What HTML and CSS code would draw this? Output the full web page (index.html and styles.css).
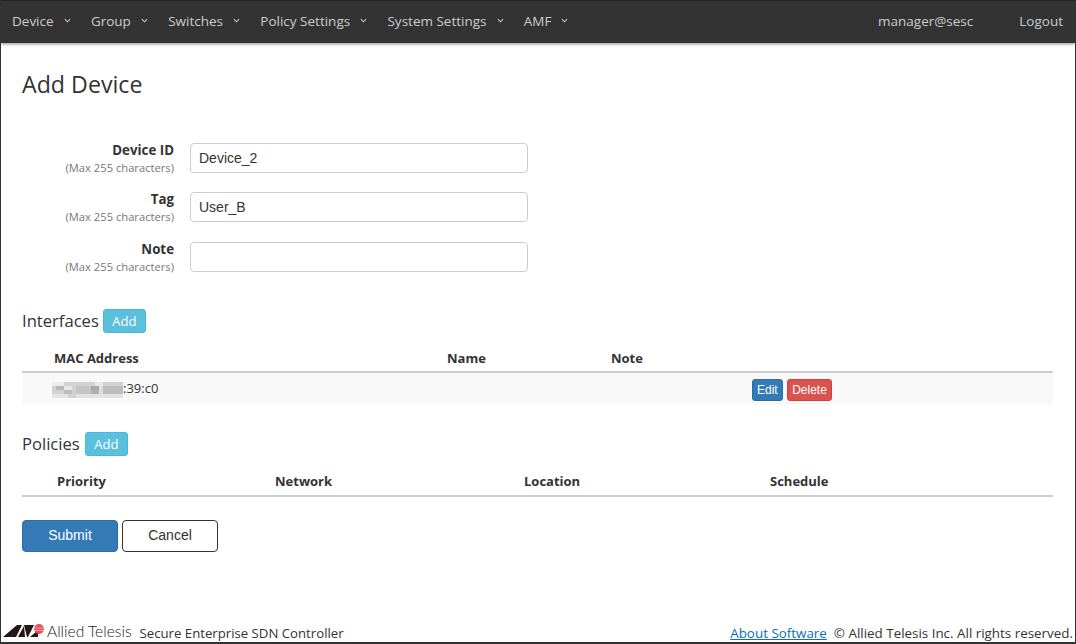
FILE: index.html
```html
<!doctype html>
<html lang="en">
<head>
<meta charset="utf-8">
<title>Add Device</title>
<link rel="stylesheet" href="styles.css">
</head>
<body>

<div class="frame">

	<div class="nav">
		<ul class="menu">
			<li>Device <svg class="caret" viewBox="0 0 8 5"><path d="M1 1l3 3 3-3"/></svg></li>
			<li>Group <svg class="caret" viewBox="0 0 8 5"><path d="M1 1l3 3 3-3"/></svg></li>
			<li>Switches <svg class="caret" viewBox="0 0 8 5"><path d="M1 1l3 3 3-3"/></svg></li>
			<li>Policy Settings <svg class="caret" viewBox="0 0 8 5"><path d="M1 1l3 3 3-3"/></svg></li>
			<li>System Settings <svg class="caret" viewBox="0 0 8 5"><path d="M1 1l3 3 3-3"/></svg></li>
			<li>AMF <svg class="caret" viewBox="0 0 8 5"><path d="M1 1l3 3 3-3"/></svg></li>
		</ul>
		<div class="user">manager@sesc</div>
		<div class="logout">Logout</div>
	</div>

	<div class="content">
		<h1>Add Device</h1>

		<div class="form">
			<div class="row">
				<label><b>Device ID</b><small>(Max 255 characters)</small></label>
				<input type="text" value="Device_2">
			</div>
			<div class="row">
				<label><b>Tag</b><small>(Max 255 characters)</small></label>
				<input type="text" value="User_B">
			</div>
			<div class="row">
				<label><b>Note</b><small>(Max 255 characters)</small></label>
				<input type="text">
			</div>
		</div>

		<div class="head head-first">
			<h2>Interfaces</h2>
			<button class="btn info">Add</button>
		</div>
		<table class="list iface">
			<tr>
				<th class="c1">MAC Address</th>
				<th class="c2">Name</th>
				<th class="c3">Note</th>
				<th></th>
			</tr>
			<tr class="odd">
				<td class="mac">
					<svg class="blur" viewBox="0 0 72 16" shape-rendering="crispEdges">
						<rect width="72" height="16" fill="#d2d2d2"/>
						<rect x="0" y="0" width="12" height="4" fill="#ececec"/>
						<rect x="4" y="4" width="8" height="4" fill="#b8b8b8"/>
						<rect x="12" y="4" width="8" height="4" fill="#e6e6e6"/>
						<rect x="12" y="8" width="8" height="4" fill="#bcbcbc"/>
						<rect x="0" y="12" width="16" height="4" fill="#e4e4e4"/>
						<rect x="24" y="4" width="20" height="8" fill="#c4c4c4"/>
						<rect x="44" y="0" width="8" height="4" fill="#e8e8e8"/>
						<rect x="40" y="4" width="8" height="4" fill="#a8a8a8"/>
						<rect x="48" y="4" width="4" height="8" fill="#dedede"/>
						<rect x="40" y="8" width="8" height="4" fill="#b0b0b0"/>
						<rect x="52" y="4" width="20" height="8" fill="#bdbdbd"/>
						<rect x="24" y="12" width="48" height="4" fill="#e2e2e2"/>
					</svg><span>:39:c0</span>
				</td>
				<td></td>
				<td></td>
				<td><div class="acts"><button class="btn primary">Edit</button><button class="btn danger">Delete</button></div></td>
			</tr>
		</table>

		<div class="head head-second">
			<h2>Policies</h2>
			<button class="btn info">Add</button>
		</div>
		<table class="list policy">
			<tr>
				<th class="p1">Priority</th>
				<th class="p2">Network</th>
				<th class="p3">Location</th>
				<th>Schedule</th>
			</tr>
		</table>

		<div class="actions">
			<button class="big primary">Submit</button>
			<button class="big plain">Cancel</button>
		</div>
	</div>

	<div class="footer">
		<div class="brand">
			<svg class="logo" viewBox="0 0 42 15">
				<path d="M0 14L14 2h5L13 14z" fill="#231815"/>
				<path d="M15 14L21 3l1 11z" fill="#231815"/>
				<path d="M21 2h10l-6 12h-1z" fill="#231815"/>
				<path d="M27 14l8-7v7z" fill="#231815"/>
				<circle cx="36" cy="6" r="5" fill="#e8505b"/>
				<path d="M31 5h10M31 7.500h10" stroke="#fff" stroke-width=".5"/>
			</svg>
			<span class="logotext">Allied Telesis</span>
			<span class="product">Secure Enterprise SDN Controller</span>
		</div>
		<div class="copy"><a href="#">About Software</a>&nbsp; © Allied Telesis Inc. All rights reserved.</div>
	</div>

</div>

</body>
</html>
```

FILE: styles.css
```css
html,body {margin:0;padding:0;}
body {background-color:#fff;}
ul {margin:0;padding:0;list-style:none;}

.frame {
	display:flex;
	flex-direction:column;
	box-sizing:border-box;
	width:1076px; height:644px;
	border:1px solid #333;
	border-top:0;
	font-family:"Open Sans","Liberation Sans",sans-serif;
	color:#333;
	overflow:hidden;
}

/* nav */

.nav {
	display:flex;
	align-items:center;
	flex:none;
	height:43px;
	box-sizing:border-box;
	padding:0 12px 3px 11px;
	background-color:#333;
	border-top:1px solid #222;
	box-shadow:0 1px 3px rgba(0,0,0,0.45);
	color:#ccc;
	font-size:13.500px;
}

.menu {display:flex;gap:20.300px;}
.menu li {display:flex;align-items:center;gap:10px;white-space:nowrap;}

.caret {
	width:7px; height:5px;
	fill:none;
	stroke:#ccc;
	stroke-width:1.200;
}

.user {margin-left:auto;}
.logout {margin-left:46px;}

/* content */

.content {flex:1;padding:0 22px 0 21px;}

h1 {
	margin:26px 0 0;
	font-size:23.200px;
	line-height:30px;
	font-weight:400;
}

.form {margin-top:44px;}

.row {
	display:flex;
	height:30px;
	margin-bottom:19.400px;
}

.row label {
	width:152px;
	margin-right:16px;
	text-align:right;
}
.row b {display:block;font-size:13.300px;line-height:14px;}
.row small {display:block;font-size:11.200px;line-height:16px;margin-top:3px;color:#777;}

.row input {
	width:338px; height:30px;
	box-sizing:border-box;
	padding:0 8px;
	border:1px solid #ccc;
	border-radius:4px;
	font-family:"Liberation Sans",sans-serif;
	font-size:14px;
	color:#333;
}

.head {display:flex;align-items:center;gap:4px;}
.head-first {margin-top:37px;}
.head-second {margin-top:27px;gap:5px;}

h2 {
	margin:0;
	font-size:16.600px;
	line-height:24px;
	font-weight:400;
}

.btn {
	height:22px;
	padding:0 4px;
	border:1px solid transparent;
	border-radius:3px;
	font-family:"Liberation Sans",sans-serif;
	font-size:12px;
	color:#fff;
}
.head .btn {height:24px;padding:0 8.500px;font-family:"Open Sans",sans-serif;font-size:13px;}

.info {background-color:#5bc0de;border-color:#46b8da;}
.primary {background-color:#337ab7;border-color:#2e6da4;}
.danger {background-color:#d9534f;border-color:#d43f3a;padding:0 4.500px;}

.list {
	width:100%;
	border-collapse:collapse;
	table-layout:fixed;
	font-size:13px;
}

.list th {
	height:25px;
	padding:0;
	border-bottom:2px solid #ccc;
	text-align:left;
	font-weight:700;
}

.iface {margin-top:13px;}
.iface .c1 {width:393px;padding-left:32px;}
.iface .c2 {width:164px;}
.iface .c3 {width:141px;}
.odd {background-color:#f9f9f9;}
.odd td {height:32px;padding:0;}
.mac {padding-left:30px !important;white-space:nowrap;}
.mac span {position:relative;top:-1px;}

.blur {
	width:71px; height:16px;
	vertical-align:-4px;
	filter:blur(0.6px);
}

.acts {display:flex;gap:4px;padding-top:2px;}

.policy {margin-top:13px;}
.policy th {height:24px;padding-bottom:2px;}
.policy .p1 {width:218px;padding-left:35px;}
.policy .p2 {width:249px;}
.policy .p3 {width:246px;}

.actions {display:flex;gap:4px;margin-top:23px;}

.big {
	width:96px; height:32px;
	padding:0 0 2px;
	border:1px solid #333;
	border-radius:4px;
	font-family:"Liberation Sans",sans-serif;
	font-size:14px;
}
.big.primary {color:#fff;border-color:#2e6da4;}
.big.plain {background-color:#fff;color:#333;}

/* footer */

.footer {
	display:flex;
	justify-content:space-between;
	align-items:flex-end;
	flex:none;
	height:22px;
	padding:0 2px 0 2px;
	font-size:13.400px;
	border-bottom:1px solid #333;
}

.brand {display:flex;align-items:center;}
.logo {width:42px;height:15px;margin-bottom:3px;}
.logotext {margin-left:2px;margin-bottom:2px;font-family:"Lato",sans-serif;font-size:15.600px;font-weight:300;color:#231815;}
.product {margin-left:8px;margin-top:1px;font-size:13.200px;}
.copy a {color:#0a6ebd;text-decoration:underline;}
```
